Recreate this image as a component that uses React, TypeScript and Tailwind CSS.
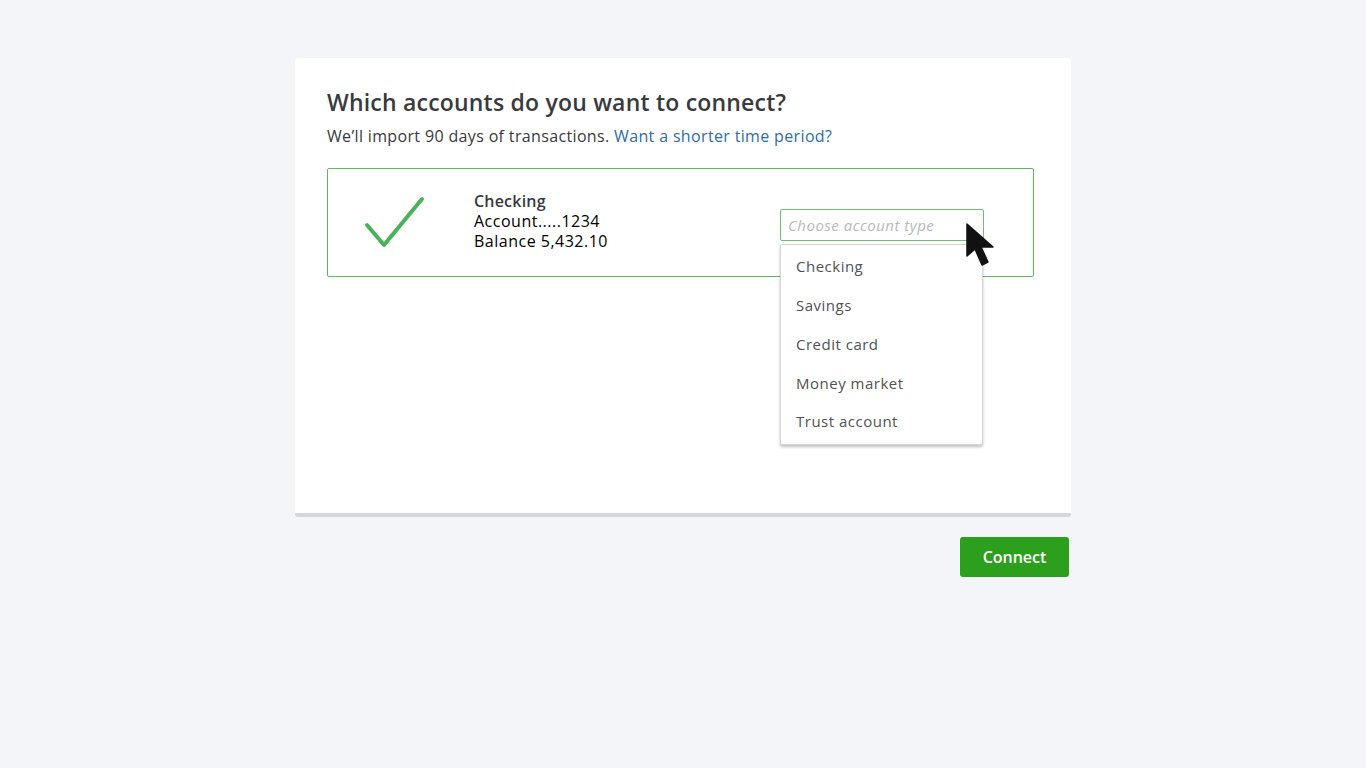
import React from 'react';

const accountTypes = ['Checking', 'Savings', 'Credit card', 'Money market', 'Trust account'];

// Mouse pointer drawn over the select
const Cursor: React.FC = () => (
  <svg width="32" height="46" viewBox="0 0 32 46" className="absolute left-[185px] top-[13px] z-20">
    <path d="M2 2 L2 34 L10 27 L17 43 L23 40 L16 25 L28 25 Z" fill="#111" stroke="#111" strokeWidth="1.5" strokeLinejoin="round" />
  </svg>
);

export default function App() {
  return (
    <div className="min-h-screen bg-[#f4f5f8] flex flex-col items-center font-['Open_Sans',sans-serif] text-[#393a3d]">
      <div className="w-[776px] h-[459px] mt-[58px] bg-white rounded-[3px] border-b-[4px] border-[#d4d7dc] px-[32px] pt-[28px]">
        <h1 className="text-[23px] leading-[32px] font-semibold tracking-[0.2px] text-[#393a3d]">
          Which accounts do you want to connect?
        </h1>
        <p className="mt-[6px] text-[16px] leading-[24px] tracking-[0.35px] text-[#393a3d]">
          We’ll import 90 days of transactions.{' '}
          <span className="text-[#2d6ea8]">Want a shorter time period?</span>
        </p>

        <div className="mt-[20px] w-[707px] h-[109px] border border-[#5cb85c] rounded-[2px] flex items-center relative">
          <svg width="62" height="54" viewBox="0 0 62 54" className="ml-[36px] mt-[-2px]">
            <path d="M3 30 L20 50 L58 4" fill="none" stroke="#46b35a" strokeWidth="4" strokeLinecap="round" strokeLinejoin="round" />
          </svg>
          <div className="ml-[48px] mt-[-4px] text-[16px] leading-[20px] tracking-[0.5px] text-black">
            <div className="font-semibold text-[#393a3d] tracking-[0.2px]">Checking</div>
            <div>Account.....1234</div>
            <div>Balance 5,432.10</div>
          </div>

          <div className="absolute left-[452px] top-[40px] w-[204px]">
            <div className="h-[32px] border border-[#6cc070] rounded-[2px] flex items-center px-[7px] text-[15px] italic tracking-[0.5px] text-[#b8b9bc]">
              Choose account type
            </div>
            <ul className="mt-[3px] w-[203px] bg-white border border-[#d4d7dc] rounded-[2px] shadow-[0_2px_3px_rgba(0,0,0,0.25)] pt-[2px] pb-[3px] z-10 relative">
              {accountTypes.map((t) => (
                <li key={t} className="h-[38.8px] flex items-center px-[15px] text-[15px] tracking-[0.5px] text-[#4f5256]">
                  {t}
                </li>
              ))}
            </ul>
            <Cursor />
          </div>
        </div>
      </div>

      <div className="w-[776px] flex justify-end mt-[20px] pr-[2px]">
        <button className="w-[109px] h-[40px] bg-[#2ca01c] rounded-[3px] text-white text-[16px] font-semibold">
          Connect
        </button>
      </div>
    </div>
  );
}
